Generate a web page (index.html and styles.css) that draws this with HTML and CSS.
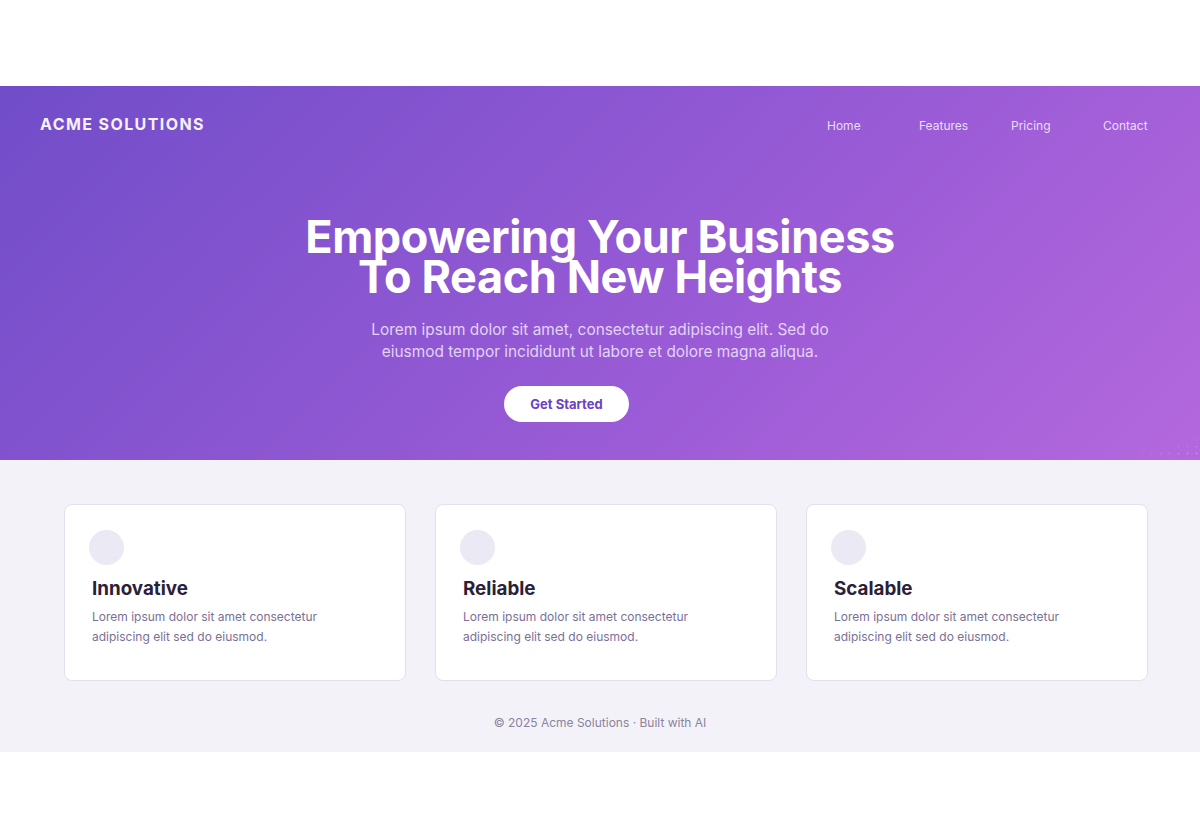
FILE: index.html
```html
<!DOCTYPE html>
<html lang="en">
<head>
<meta charset="utf-8">
<title>Acme Solutions</title>
<link rel="stylesheet" href="styles.css">
</head>
<body>
<div class="page">
  <header class="hero">
    <nav class="nav">
      <div class="brand">ACME SOLUTIONS</div>
      <ul class="nav-links">
        <li><a href="#">Home</a></li>
        <li><a href="#">Features</a></li>
        <li><a href="#">Pricing</a></li>
        <li><a href="#">Contact</a></li>
      </ul>
    </nav>
    <div class="hero-body">
      <h1 class="hero-title">Empowering Your Business<br>To Reach New Heights</h1>
      <p class="hero-text">Lorem ipsum dolor sit amet, consectetur adipiscing elit. Sed do eiusmod tempor incididunt ut labore et dolore magna aliqua.</p>
      <div class="hero-actions">
        <a class="btn" href="#">Get Started</a>
      </div>
    </div>
    <div class="hero-dots" aria-hidden="true"></div>
  </header>
  <main class="features">
    <div class="cards">
      <article class="card">
        <div class="card-icon"></div>
        <h3 class="card-title">Innovative</h3>
        <p class="card-text">Lorem ipsum dolor sit amet consectetur adipiscing elit sed do eiusmod.</p>
      </article>
      <article class="card">
        <div class="card-icon"></div>
        <h3 class="card-title">Reliable</h3>
        <p class="card-text">Lorem ipsum dolor sit amet consectetur adipiscing elit sed do eiusmod.</p>
      </article>
      <article class="card">
        <div class="card-icon"></div>
        <h3 class="card-title">Scalable</h3>
        <p class="card-text">Lorem ipsum dolor sit amet consectetur adipiscing elit sed do eiusmod.</p>
      </article>
    </div>
    <footer class="footer">© 2025 Acme Solutions · Built with AI</footer>
  </main>
</div>
</body>
</html>
```
FILE: styles.css
```css
* { box-sizing: border-box; }
html, body { margin: 0; padding: 0; }
body {
  background: #ffffff;
  font-family: Inter, "Noto Sans", "Liberation Sans", sans-serif;
  min-height: 840px;
  padding-bottom: 2px;
  display: flex;
  flex-direction: column;
  justify-content: center;
}
.page { width: 100%; }

.hero {
  position: relative;
  height: 374px;
  background: linear-gradient(135deg, #714dc9 0%, #9a5bd6 60%, #b468dd 100%);
  overflow: hidden;
}
.nav {
  display: flex;
  align-items: center;
  justify-content: space-between;
  padding: 14px 40px 0 40px;
  height: 62px;
}
.brand {
  color: #f6f1fd;
  font-weight: 700;
  font-size: 16px;
  letter-spacing: 1.4px;
}
.nav-links {
  display: flex;
  gap: 35px;
  list-style: none;
  margin: 0;
  padding: 0;
}
.nav-links li { width: 57px; }
.nav-links a {
  color: #e9ddf8;
  text-decoration: none;
  font-size: 12px;
  white-space: nowrap;
}

.hero-body {
  display: flex;
  flex-direction: column;
  align-items: center;
  text-align: center;
  padding-top: 69px;
}
.hero-title {
  margin: 0;
  color: #ffffff;
  font-size: 45px;
  font-weight: 700;
  line-height: 40px;
  letter-spacing: -0.4px;
}
.hero-text {
  margin: 22px 0 0;
  width: 470px;
  color: #e3d3f6;
  font-size: 15.4px;
  line-height: 22px;
}
.hero-actions {
  display: flex;
  justify-content: center;
  padding-right: 67px;
  margin-top: 23px;
}
.btn {
  display: inline-flex;
  align-items: center;
  justify-content: center;
  width: 125px;
  height: 36px;
  border-radius: 18px;
  background: #ffffff;
  color: #6a43c4;
  font-weight: 700;
  font-size: 13px;
  text-decoration: none;
}
.hero-dots {
  position: absolute;
  right: 0;
  bottom: 0;
  width: 80px;
  height: 24px;
  background-image: radial-gradient(circle, rgba(240, 175, 235, 0.7) 0.7px, transparent 1.1px);
  background-size: 9px 7px;
  -webkit-mask-image: linear-gradient(165deg, transparent 45%, #000 85%);
  mask-image: linear-gradient(165deg, transparent 45%, #000 85%);
}

.features {
  background: #f3f2f8;
  padding: 44px 0 0;
  height: 292px;
}
.cards {
  display: grid;
  grid-template-columns: repeat(3, 342px);
  gap: 29px;
  padding-left: 64px;
}
.card {
  background: #ffffff;
  border: 1px solid #e2e0ee;
  border-radius: 8px;
  height: 177px;
  padding: 25px 24px 0;
}
.card-icon {
  width: 35px;
  height: 35px;
  border-radius: 50%;
  background: #ebe9f4;
}
.card-title {
  margin: 12px 0 0 3px;
  font-size: 18.8px;
  line-height: 24px;
  font-weight: 700;
  color: #2a2139;
}
.card-text {
  margin: 6px 0 0 3px;
  width: 240px;
  font-size: 12px;
  line-height: 20px;
  color: #7a7096;
}
.footer {
  text-align: center;
  margin-top: 34px;
  font-size: 12px;
  color: #8b82a0;
}
```
